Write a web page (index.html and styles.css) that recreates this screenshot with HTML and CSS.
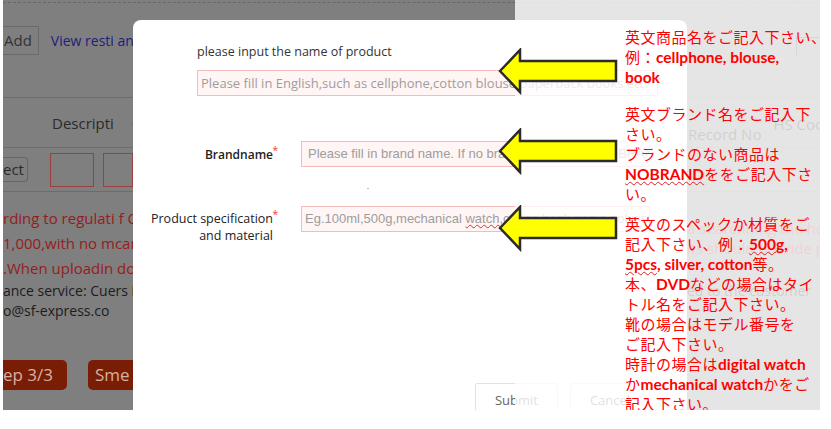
FILE: index.html
```html
<!DOCTYPE html>
<html lang="en">

<head>
  <meta charset="UTF-8">
  <title>Product info</title>
  <link rel="stylesheet" href="styles.css">
</head>

<body>
  <div class="shot">

    <!-- page behind the dialog -->
    <div class="page">
      <div class="row toolbar">
        <div class="l">
          <span class="btn-add">Add</span>
          <span class="link">View resti and</span>
        </div>
        <div class="r">
          <span class="search-box"></span>
        </div>
      </div>
      <div class="rule top-rule"></div>
      <div class="row thead">
        <div class="l">
          <span class="col-desc">Descripti</span>
          <span class="col-c">C</span>
        </div>
        <div class="r">
          <span class="col-record">Record No</span>
          <span class="col-hs">HS Cod</span>
        </div>
      </div>
      <div class="rule"></div>
      <div class="row tbody">
        <div class="l">
          <span class="btn-sel">ect</span>
          <span class="cell"></span>
          <span class="cell short"></span>
        </div>
        <div class="r"></div>
      </div>
      <div class="rule"></div>
      <div class="row notice">
        <div class="l">
          rding to regulati f CN<br>
          1,000,with no mcan 1<br>
          .When uploadin doc
        </div>
        <div class="r">
          a searchhing the hou<br>
          its should provide pu
        </div>
      </div>
      <div class="row service">
        <div class="l">
          ance service: Cuers in<br>
          o@sf-express.co
        </div>
        <div class="r">
          ed to the customer
        </div>
      </div>
      <div class="row steps">
        <div class="l">
          <span class="btn-step">ep 3/3</span>
          <span class="btn-step">Sme</span>
        </div>
        <div class="r"></div>
      </div>
    </div>

    <!-- dialog -->
    <div class="modal">
      <div class="modal-title">please input the name of product</div>
      <div class="field wide">Please fill in English,such as cellphone,cotton blouse,paperback books etc.</div>

      <div class="form-row brand-row">
        <div class="label"><span class="req">Brandname</span></div>
        <div class="field latin brand">Please fill in brand name. If no brand, please fill in NOBRAND</div>
      </div>

      <div class="form-row spec-row">
        <div class="label"><span class="req">Product specification</span><br>and material</div>
        <div class="field latin spec">Eg.100ml,500g,mechanical <span class="typo">watch,cott</span>on,book name,polyester</div>
      </div>
      <div class="dot"></div>

      <div class="modal-footer">
        <span class="btn submit">Submit</span>
        <span class="btn cancel">Cancel</span>
      </div>
    </div>

    <div class="fade"></div>

    <!-- annotations -->
    <svg class="arrow a1" width="125" height="48" viewBox="0 0 125 48">
      <polygon points="3,23 23,2 23,13 119,13 119,33 23,33 23,44" />
    </svg>
    <svg class="arrow a2" width="125" height="48" viewBox="0 0 125 48">
      <polygon points="3,23 23,2 23,13 119,13 119,33 23,33 23,44" />
    </svg>
    <svg class="arrow a3" width="125" height="48" viewBox="0 0 125 48">
      <polygon points="3,23 23,2 23,13 119,13 119,33 23,33 23,44" />
    </svg>

    <div class="notes">
      <p class="note n1">
        英文商品名をご記入下さい、<br>
        例：<span class="en">cellphone, blouse,</span><br>
        <span class="en">book</span>
      </p>
      <p class="note n2">
        英文ブランド名をご記入下<br>
        さい。<br>
        ブランドのない商品は<br>
        <span class="en sq">NOBRAND</span>ををご記入下さ<br>
        い。
      </p>
      <p class="note n3">
        英文のスペックか材質をご<br>
        記入下さい、例：<span class="en sq">500g</span><span class="en">,</span><br>
        <span class="en sq">5pcs</span><span class="en">, silver, cotton</span>等。<br>
        本、<span class="en">DVD</span>などの場合はタイ<br>
        トル名をご記入下さい。<br>
        靴の場合はモデル番号を<br>
        ご記入下さい。<br>
        時計の場合は<span class="en">digital watch</span><br>
        か<span class="en">mechanical watch</span>かをご<br>
        記入下さい。
      </p>
    </div>

  </div>
</body>

</html>
```

FILE: styles.css
```css
body {
  margin: 0;
  background: #fff;
}

.shot {
  position: relative;
  margin-left: 3px;
  width: 817px;
  height: 410px;
  overflow: hidden;
  background: #7f7f7f;
}

/* page behind the overlay */
.page {
  margin-top: 2px;
  border-top: 1px dashed #676767;
  font-family: "Open Sans", sans-serif;
  font-size: 14px;
  color: #2a2a2a;
}

.row {
  display: flex;
  justify-content: space-between;
}

.row .l {
  width: 130px;
  overflow: hidden;
  white-space: nowrap;
}

.row .r {
  width: 133px;
  overflow: hidden;
  white-space: nowrap;
}

.rule {
  border-top: 1px solid #6c6c6c;
}

.toolbar {
  padding-top: 23px;
  height: 29px;
}

.toolbar .l {
  display: flex;
  align-items: center;
}

.btn-add {
  box-sizing: border-box;
  height: 29px;
  line-height: 27px;
  padding: 0 6px 0 1px;
  border: 1px solid #6a6a6a;
  border-left: none;
  font-size: 15px;
  color: #333;
}

.link {
  margin-left: 12px;
  color: #20207c;
  font-size: 14px;
}

.search-box {
  display: block;
  box-sizing: border-box;
  margin: 11px 0 0 109px;
  width: 40px;
  height: 22px;
  border: 1px solid #333;
}

.top-rule {
  margin-top: 42px;
}

.thead {
  height: 49px;
}

.thead .l {
  display: flex;
  align-items: center;
  font-size: 15px;
}

.col-desc {
  margin-left: 49px;
}

.col-c {
  margin-left: 18px;
}

.thead .r {
  display: flex;
  align-items: flex-start;
  color: #111;
  font-size: 15px;
}

.col-record {
  margin: 26px 0 0 1px;
}

.col-hs {
  margin: 16px 0 0 12px;
}

.tbody {
  height: 43px;
}

.tbody .l {
  display: flex;
  align-items: center;
}

.btn-sel {
  box-sizing: border-box;
  height: 25px;
  line-height: 23px;
  padding: 0 3px 0 0;
  border: 1px solid #666;
  border-left: none;
  border-radius: 0 4px 4px 0;
  font-size: 15px;
  color: #2a2a2a;
}

.cell {
  box-sizing: border-box;
  margin-left: 22px;
  width: 60px;
  height: 34px;
  border: 1px solid #9a4040;
}

.cell.short {
  margin-left: 9px;
  width: 40px;
}

.notice {
  padding-top: 14px;
  height: 75px;
  font-size: 15px;
  line-height: 25px;
}

.notice .l {
  color: #951d1d;
}

.notice .r {
  padding-top: 12px;
  line-height: 20px;
  color: #b02020;
}

.service {
  height: 40px;
  line-height: 20px;
  font-size: 14px;
}

.service .l {
  color: #1c1c1c;
}

.service .r {
  color: #111;
  padding-left: 3px;
}

.steps {
  margin-top: 39px;
}

.steps .l {
  display: flex;
}

.btn-step {
  box-sizing: border-box;
  height: 30px;
  line-height: 30px;
  padding: 0 14px 0 0;
  background: #7a1d05;
  border-radius: 0 5px 5px 0;
  color: #d6b0a4;
  font-size: 17px;
}

.btn-step + .btn-step {
  margin-left: 21px;
  padding-left: 7px;
  border-radius: 5px 0 0 5px;
}

/* dialog */
.modal {
  position: absolute;
  left: 130px;
  top: 20px;
  box-sizing: border-box;
  width: 554px;
  height: 420px;
  padding: 23px 29px 0 10px;
  background: #fff;
  border-radius: 8px;
  font-family: "Open Sans", sans-serif;
  font-size: 13px;
  color: #333;
}

.modal-title {
  margin-left: 54px;
  line-height: 18px;
  font-size: 12.5px;
}

.field {
  box-sizing: border-box;
  height: 26px;
  line-height: 24px;
  padding: 0 4px;
  border: 1px solid #f5baba;
  background: #fff5f5;
  color: #9d9d9d;
  white-space: nowrap;
  overflow: hidden;
}

.field.wide {
  margin: 9px 0 0 54px;
  padding-left: 3px;
}

.field.latin {
  font-family: "Liberation Sans", Arial, sans-serif;
  font-size: 13px;
  margin-right: 8px;
}

.field.brand {
  padding-left: 6px;
}

.field.spec {
  padding-left: 3px;
}

.typo {
  text-decoration: underline wavy #e03030;
  text-decoration-thickness: 1px;
}

.form-row {
  display: grid;
  grid-template-columns: 130px 1fr;
  column-gap: 28px;
}

.brand-row {
  margin-top: 45px;
  align-items: center;
}

.spec-row {
  margin-top: 39px;
  height: 40px;
  align-items: start;
}

.label {
  text-align: right;
  white-space: nowrap;
  line-height: 17px;
  font-size: 12.5px;
  color: #222;
}

.brand-row .label {
  font-weight: 600;
  font-size: 12px;
}

.spec-row .label {
  padding-top: 4px;
}

.req {
  position: relative;
}

.req::after {
  content: "*";
  position: absolute;
  right: -5px;
  top: -4px;
  font-size: 10px;
  font-weight: normal;
  color: #f33;
}

.dot {
  position: absolute;
  left: 234px;
  top: 168px;
  width: 2px;
  height: 1px;
  background: #bbb;
}

.modal-footer {
  display: flex;
  justify-content: flex-end;
  gap: 12px;
  margin: 137px 8px 0 0;
}

.btn {
  box-sizing: border-box;
  height: 36px;
  line-height: 32px;
  border: 1px solid #e2e2e2;
  border-radius: 2px;
  text-align: center;
  color: #666;
}

.btn.submit {
  width: 83px;
}

.btn.cancel {
  width: 80px;
}

/* right part of the capture is washed out */
.fade {
  position: absolute;
  left: 512px;
  top: 0;
  right: 0;
  bottom: 0;
  background: rgba(255, 255, 255, 0.8);
}

/* annotations */
.arrow {
  position: absolute;
  left: 494px;
}

.arrow polygon {
  fill: #ffff00;
  stroke: #2b2b2b;
  stroke-width: 2.5;
}

.a1 {
  top: 48px;
}

.a2 {
  top: 128px;
}

.a3 {
  top: 205px;
}

.notes {
  position: absolute;
  left: 622px;
  top: 27px;
  white-space: nowrap;
  font-family: "Noto Sans CJK JP", sans-serif;
  font-size: 15px;
  line-height: 20px;
  letter-spacing: 0.5px;
  color: #f00;
}

.note {
  margin: 0;
}

.n2 {
  margin-top: 17px;
}

.n3 {
  margin-top: 10px;
}

.en {
  font-family: Lato, "Liberation Sans", sans-serif;
  font-weight: bold;
  font-size: 15.5px;
  letter-spacing: 0;
}

.sq {
  text-decoration: underline wavy #e02020;
  text-decoration-thickness: 1px;
}
```
